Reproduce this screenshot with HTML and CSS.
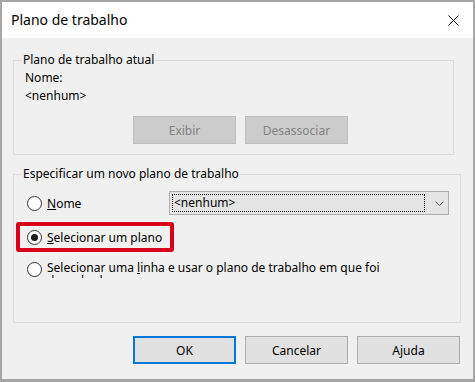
FILE: index.html
```html
<!DOCTYPE html>
<html>
<head>
    <meta charset="UTF-8">
    <title>Plano de trabalho</title>
    <link rel="stylesheet" href="styles.css">
</head>
<body>

    <div class="window">
        <div class="titlebar">
            <span class="title">Plano de trabalho</span>
            <svg class="close" width="11" height="11" viewBox="0 0 11 11">
                <path d="M0.5 0.5 L10.5 10.5 M10.5 0.5 L0.5 10.5" stroke="#000" stroke-width="1" fill="none"/>
            </svg>
        </div>

        <div class="content">
            <fieldset class="group current">
                <legend>Plano de trabalho atual</legend>
                <div class="line">Nome:</div>
                <div class="line">&lt;nenhum&gt;</div>
                <div class="button-row">
                    <button class="btn" disabled>Exibir</button>
                    <button class="btn" disabled>Desassociar</button>
                </div>
            </fieldset>

            <fieldset class="group specify">
                <legend>Especificar um novo plano de trabalho</legend>

                <div class="option option-name">
                    <label class="radio">
                        <input type="radio" name="mode">
                        <span><u>N</u>ome</span>
                    </label>
                    <div class="combo">
                        <div class="combo-value">&lt;nenhum&gt;</div>
                        <svg class="chevron" width="9" height="5" viewBox="0 0 9 5">
                            <path d="M0.5 0.5 L4.5 4.5 L8.5 0.5" stroke="#555" stroke-width="1" fill="none"/>
                        </svg>
                    </div>
                </div>

                <div class="option option-plane">
                    <div class="highlight"></div>
                    <label class="radio">
                        <input type="radio" name="mode" checked>
                        <span><u>S</u>elecionar um plano</span>
                    </label>
                </div>

                <div class="option option-line">
                    <label class="radio multi">
                        <input type="radio" name="mode">
                        <span>Selecionar uma <u>l</u>inha e usar o plano de trabalho em que foi desenhado</span>
                    </label>
                </div>
            </fieldset>

            <div class="dialog-buttons">
                <button class="btn default">OK</button>
                <button class="btn">Cancelar</button>
                <button class="btn">Ajuda</button>
            </div>
        </div>
    </div>

</body>
</html>
```

FILE: styles.css
```css
        body {
            margin: 0;
            font-family: "Noto Sans", "Liberation Sans", sans-serif;
            font-size: 12px;
            color: #000;
            background: #fff;
        }
        .window {
            width: 471px;
            height: 377px;
            border: 2px solid #a6a6a6;
            border-bottom-width: 3px;
            display: flex;
            flex-direction: column;
        }
        .titlebar {
            height: 36px;
            background: #fff;
            display: flex;
            align-items: center;
            justify-content: space-between;
            padding: 0 14px 0 9px;
        }
        .title {
            font-size: 14px;
            margin-top: -1px;
        }
        .close {
            display: block;
        }
        .content {
            flex: 1;
            background: #f0f0f0;
            padding: 14px 0 0 11px;
        }
        .group {
            margin: 0;
            border: 1px solid #dcdcdc;
            padding: 0 11px 10px 11px;
            box-sizing: border-box;
        }
        .group legend {
            margin-left: -3px;
            padding: 0 1px;
            line-height: 16px;
        }
        .current {
            width: 441px;
        }
        .specify {
            width: 448px;
            margin-top: 11px;
            padding-bottom: 44px;
        }
        .line {
            line-height: 18px;
        }
        .current .line:first-of-type {
            margin-top: 1px;
        }
        .button-row {
            display: flex;
            gap: 9px;
            margin: 11px 0 0 108px;
        }
        .btn {
            width: 103px;
            height: 28px;
            font-family: inherit;
            font-size: 12px;
            color: #000;
            background: #e1e1e1;
            border: 1px solid #adadad;
            padding: 0;
            box-sizing: border-box;
        }
        .btn:disabled {
            background: #cccccc;
            border-color: #bfbfbf;
            color: #838383;
        }
        .btn.default {
            border: 2px solid #0078d7;
        }
        .option {
            display: flex;
            align-items: center;
            padding-left: 2px;
        }
        .option-name {
            margin-top: 9px;
            height: 24px;
        }
        .option-plane {
            position: relative;
            height: 20px;
            margin-top: 12px;
        }
        .option-line {
            margin-top: 14px;
            align-items: flex-start;
        }
        .radio {
            display: flex;
            align-items: center;
            gap: 5px;
            width: 142px;
            white-space: nowrap;
        }
        .radio input {
            appearance: none;
            -webkit-appearance: none;
            margin: 0;
            width: 15px;
            height: 15px;
            border: 1px solid #333;
            border-radius: 50%;
            background: #fff;
            box-sizing: border-box;
            flex: none;
            position: relative;
            z-index: 1;
        }
        .radio input:checked::after {
            content: "";
            position: absolute;
            left: 3px;
            top: 3px;
            width: 7px;
            height: 7px;
            border-radius: 50%;
            background: #1a1a1a;
        }
        .radio span {
            position: relative;
            z-index: 1;
        }
        .radio.multi {
            width: 420px;
            align-items: flex-start;
            white-space: normal;
        }
        .radio.multi input {
            margin-top: 1px;
        }
        /* the control is too short for two lines, the second one is cut */
        .radio.multi span {
            width: 360px;
            line-height: 13px;
            height: 17px;
            overflow: hidden;
        }
        .highlight {
            position: absolute;
            left: -9px;
            top: -5px;
            width: 158px;
            height: 30px;
            border: 4px solid #d9001b;
            border-radius: 3px;
            box-sizing: border-box;
        }
        .combo {
            width: 280px;
            height: 24px;
            background: #e5e5e5;
            border: 1px solid #adadad;
            box-sizing: border-box;
            display: flex;
            align-items: center;
            padding: 2px;
        }
        .combo-value {
            width: 253px;
            height: 18px;
            border: 1px dotted #000;
            box-sizing: border-box;
            line-height: 16px;
            padding-left: 1px;
        }
        .chevron {
            margin-left: 10px;
            display: block;
        }
        .dialog-buttons {
            display: flex;
            justify-content: flex-end;
            gap: 9px;
            margin: 13px 13px 0 0;
        }
```
